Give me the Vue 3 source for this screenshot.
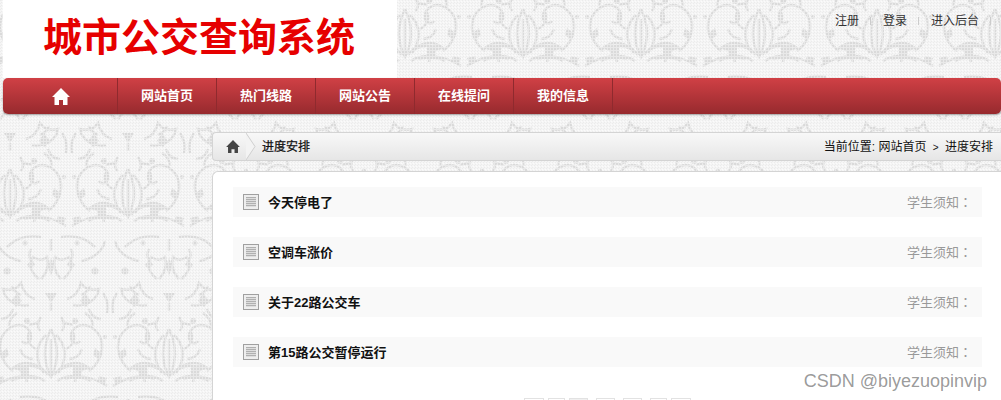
<script setup>
const navItems = ['网站首页', '热门线路', '网站公告', '在线提问', '我的信息']
const topLinks = ['注册', '登录', '进入后台']
const notices = ['今天停电了', '空调车涨价', '关于22路公交车', '第15路公交暂停运行']
const pager = [
  { w: 20, gap: 4 },
  { w: 17, gap: 4 },
  { w: 19, gap: 8, on: true },
  { w: 19, gap: 8 },
  { w: 19, gap: 8 },
  { w: 17, gap: 4 },
  { w: 20, gap: 0 }
]
const homePath = 'M9 0 0 9h2.5v8H7v-5h4v5h4.5V9H18z'
const fleurCopies = [
  [41, 80], [159, 80], [41, 400], [159, 400],
  [0, 240], [118, 240]
]
</script>

<template>
  <div class="page">
    <svg class="damask" width="1001" height="400" aria-hidden="true">
      <defs>
        <pattern id="weave" width="3" height="3" patternUnits="userSpaceOnUse">
          <rect width="3" height="3" fill="#f5f5f5" />
          <rect width="1" height="1" fill="#ececec" />
          <rect x="2" y="1" width="1" height="1" fill="#fbfbfb" />
          <rect x="1" y="2" width="1" height="1" fill="#ececec" />
        </pattern>
        <pattern id="lace" width="3" height="3" patternUnits="userSpaceOnUse">
          <rect width="2" height="2" fill="#dadada" />
          <rect x="2" width="1" height="3" fill="#e9e9e9" />
          <rect y="2" width="3" height="1" fill="#e9e9e9" />
        </pattern>
        <g id="half" fill="none" stroke="url(#lace)" stroke-width="2.5">
          <path d="M-3-8C-12-20-26-24-38-15c8 0 13 6 14 14M-6-2C-18-10-40-8-56 3M-10-14c-8-4-16-4-22 0M-14-4c-8-2-18-2-26 2" />
          <path d="M-5-48C-16-38-16-22-7-10M-15-34c-8-4-10-12-6-18M-18-24c-6 0-11-4-13-10" />
          <path d="M-38-12C-54-24-56-46-40-56c10-5 20 0 20 10 0 6-6 8-9 4" />
          <path d="M-22-78c-12 2-24-4-26-16 8 2 14 0 18-6 2 8 6 14 14 16M-30-88c-5-2-8-5-9-9M-12-104c-8-6-10-14-6-22 6 4 10 4 14 0 2 8 0 16-6 22" />
          <path d="M-30-122c-12-2-22-10-24-20M-10-146c-12-2-24 0-34 10M-20-134c-2 4-2 8 0 12" />
          <path d="M-56-70c-2-8 0-14 4-20M-50-64c6 0 10-4 12-10M-34-70c-6 4-8 8-8 13" />
          <path d="M-10-66c-4 6-4 10-1 14M-14-60l-8 2" />
        </g>
        <g id="halfFill" fill="url(#lace)">
          <path d="M-22-16c-5-2-9-2-13-1 3 2 5 6 5 11l8-1zM-48-7l-8 2 2 6 8-2z" />
          <circle cx="-24" cy="-62" r="3" />
          <circle cx="-44" cy="-112" r="3.5" />
          <circle cx="-26" cy="-140" r="2.5" />
          <circle cx="-54" cy="-46" r="2" />
          <path d="M-40-82l6-8 5 8-6 6zM-50-30l6-5 2 7-5 4zM-24-118l5-6 3 6-5 4z" />
        </g>
        <g id="fleur">
          <use href="#half" />
          <use href="#half" transform="scale(-1 1)" />
          <use href="#halfFill" />
          <use href="#halfFill" transform="scale(-1 1)" />
          <path d="M0-54C-6-42-7-30-5-20M0-54C6-42 7-30 5-20M0-44V-6M-5-20c1 6 3 10 5 14 2-4 4-8 5-14" fill="none" stroke="url(#lace)" stroke-width="2.5" />
          <path d="M-3-116l3-10 3 10-3 9zM-6-90h12l-6 10z" fill="url(#lace)" />
          <path d="M0-72v-8M0-132v-12" fill="none" stroke="url(#lace)" stroke-width="2.5" />
        </g>
        <pattern id="flower" x="10" y="-17" width="118" height="320" patternUnits="userSpaceOnUse">
          <use v-for="(c, i) in fleurCopies" :key="i" href="#fleur" :transform="`translate(${c[0]} ${c[1]})`" />
        </pattern>
      </defs>
      <rect width="1001" height="400" fill="url(#weave)" />
      <rect width="1001" height="400" fill="url(#flower)" />
    </svg>

    <header class="top">
      <div class="logo">城市公交查询系统</div>
      <ul class="top-links">
        <li v-for="link in topLinks" :key="link">{{ link }}</li>
      </ul>
    </header>

    <nav class="nav">
      <div class="nav-item nav-home">
        <svg width="18" height="17" viewBox="0 0 18 17"><path fill="#fff" :d="homePath" /></svg>
      </div>
      <div v-for="item in navItems" :key="item" class="nav-item">{{ item }}</div>
    </nav>

    <main class="main">
      <div class="crumbs">
        <div class="crumb-home">
          <svg width="14" height="13" viewBox="0 0 18 17"><path fill="#444" :d="homePath" /></svg>
          <svg class="chevron" width="10" height="27" viewBox="0 0 10 27"><path d="M0 0 9 13.5 0 27" fill="#f3f3f3" stroke="#cfcfcf" /></svg>
        </div>
        <span class="crumb-title">进度安排</span>
        <span class="crumb-path">当前位置: 网站首页 <i>&gt;</i> 进度安排</span>
      </div>

      <section class="card">
        <div v-for="notice in notices" :key="notice" class="row">
          <span class="doc"><b></b></span>
          <span class="row-title">{{ notice }}</span>
          <span class="row-tag">学生须知：</span>
        </div>
        <div class="pager">
          <span
            v-for="(p, i) in pager"
            :key="i"
            :class="{ on: p.on }"
            :style="{ width: p.w + 'px', marginRight: p.gap + 'px' }"
          ></span>
        </div>
      </section>
    </main>

    <div class="mark">CSDN @biyezuopinvip</div>
  </div>
</template>

<style>
html, body { margin: 0; height: 400px; overflow: hidden; }
</style>

<style scoped>
.page { position: relative; width: 1001px; height: 400px; overflow: hidden; font-family: "Liberation Sans", "Noto Sans CJK SC", sans-serif; }
.damask { position: absolute; left: 0; top: 0; }
.top { position: relative; display: flex; justify-content: space-between; height: 78px; padding-left: 3px; }
.logo { width: 394px; background: #fff; box-sizing: border-box; padding: 14px 0 0 40px; font-size: 39px; line-height: 48px; font-weight: 700; color: #e60000; white-space: nowrap; }
.top-links { display: flex; list-style: none; margin: 0; padding: 13px 10px 0 0; font-size: 12px; line-height: 16px; color: #333; }
.top-links li { padding: 0 12px; background: linear-gradient(#ccc, #ccc) right 4px / 1px 8px no-repeat; }
.nav { position: relative; display: flex; height: 36px; margin-left: 3px; border-radius: 5px; background: linear-gradient(#d04045, #972a2e); box-shadow: 0 1px 2px rgba(0,0,0,.35); }
.nav-item { width: 98px; border-right: 1px solid #8f2a2e; text-align: center; font-size: 13px; font-weight: 700; line-height: 36px; color: #fff; }
.nav-home { display: flex; align-items: center; justify-content: center; padding-left: 2px; box-sizing: border-box; width: 115px; }
.main { position: relative; margin: 18px 0 0 212px; }
.crumbs { display: flex; align-items: center; height: 27px; border: 1px solid #d4d4d4; border-right: 0; border-radius: 4px 0 0 4px; background: linear-gradient(#f8f8f8, #e6e6e6); font-size: 12px; color: #111; }
.crumb-home { display: flex; align-items: center; gap: 6px; padding-left: 13px; }
.chevron { flex: none; }
.crumb-title { margin: 0 0 2px 6px; -webkit-text-stroke: .25px #111; }
.crumb-path { margin: 0 0 2px auto; padding-right: 8px; }
.crumb-path i { font-style: normal; font-size: 10px; margin: 0 3px; }
.card { margin-top: 10px; height: 240px; box-sizing: border-box; padding: 15px 19px 0 20px; background: #fff; border: 1px solid #d4d4d4; border-width: 1px 0 0 1px; border-top-left-radius: 6px; }
.row { display: flex; align-items: center; height: 30px; margin-bottom: 20px; background: #f9f9f9; }
.doc { display: block; flex: none; width: 16px; height: 16px; box-sizing: border-box; margin-left: 10px; padding: 2px; border: 1px solid #a0a0a0; background: #eee; }
.doc b { display: block; height: 100%; background: repeating-linear-gradient(#b0b0b0 0 1px, #ddd 1px 2px); }
.row-title { margin: 0 0 2px 9px; font-size: 13px; font-weight: 700; color: #111; }
.row-tag { margin: 0 0 2px auto; padding-right: 10px; font-size: 13px; color: #999; font-family: "Liberation Sans", "Noto Sans CJK TC", sans-serif; }
.pager { display: flex; padding: 11px 0 0 291px; }
.pager span { flex: none; height: 20px; border: 1px solid #e2e2e2; box-sizing: border-box; }
.pager .on { background: #f0f0f0; }
.mark { position: absolute; right: 14px; top: 372px; font-size: 18px; line-height: 18px; color: rgba(90,90,90,.62); }
</style>
